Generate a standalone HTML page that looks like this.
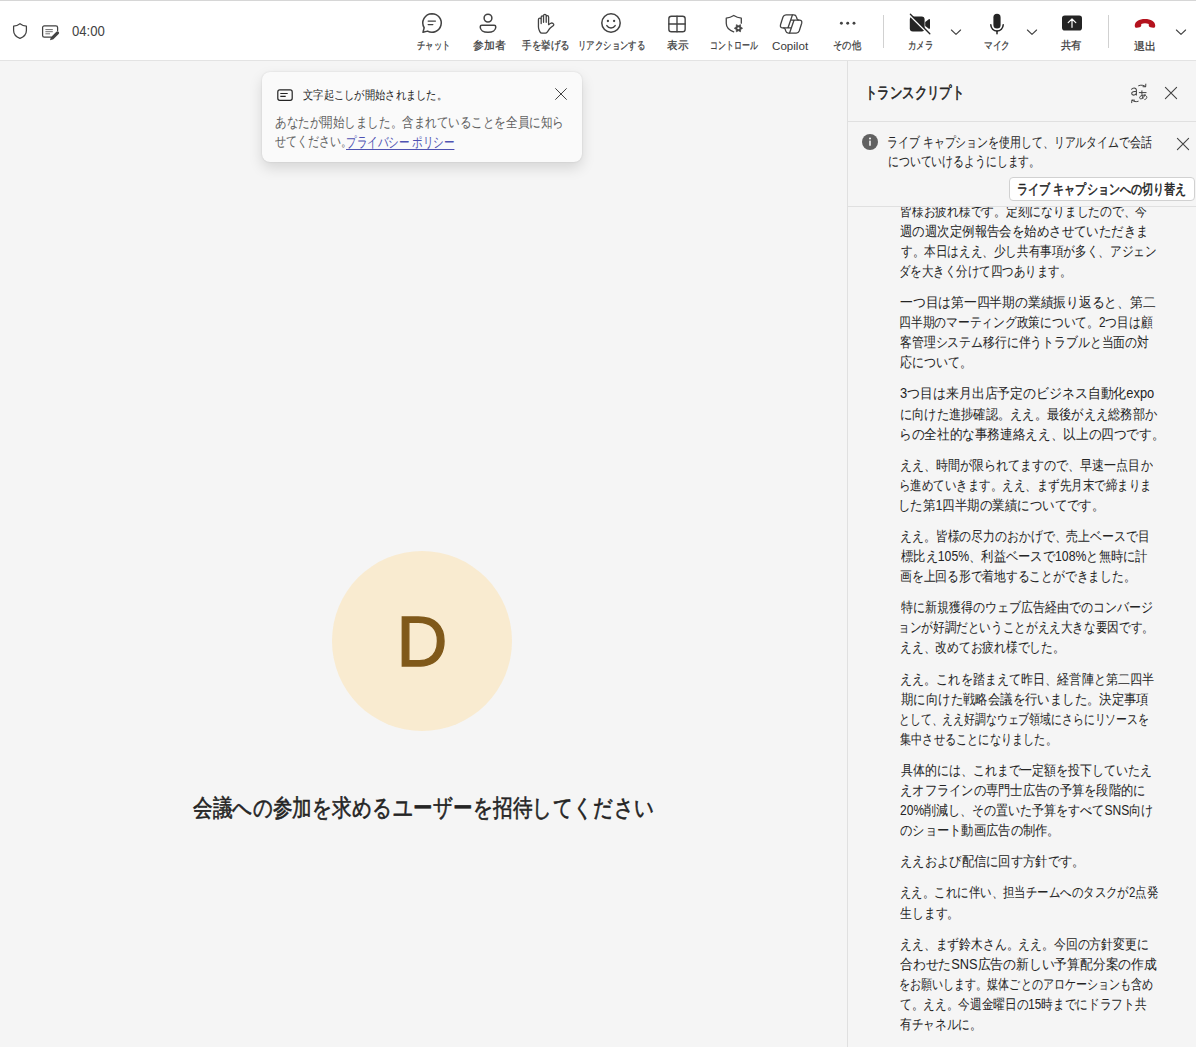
<!DOCTYPE html>
<html lang="ja">
<head>
<meta charset="utf-8">
<title>Teams</title>
<style>
*{box-sizing:border-box}
html,body{margin:0;padding:0}
body{width:1196px;height:1047px;overflow:hidden;position:relative;background:#f5f5f5;font-family:"Liberation Sans",sans-serif;color:#242424}
.bar{position:absolute;left:0;top:0;width:1196px;height:61px;background:#fff;border-top:1px solid #d6d6d6;border-bottom:1px solid #e3e3e3}
.ic{position:absolute;display:block;overflow:visible}
.sep{position:absolute;top:15px;width:1px;height:33px;background:#d1d1d1}
.t{position:absolute;white-space:nowrap;line-height:20px;height:20px;transform-origin:0 50%;text-align-last:justify;margin:0;padding:0}
.stage{position:absolute;left:0;top:61px;width:847px;height:986px;background:#f5f5f5}
.toast{position:absolute;left:262px;top:72px;width:320px;height:90px;border-radius:8px;background:#fafafa;box-shadow:0 0 2px rgba(0,0,0,.12),0 6px 14px rgba(0,0,0,.13)}
.avatar{position:absolute;left:332px;top:551px;width:180px;height:180px;border-radius:50%;background:#f9ebd0}
.avatar span{position:absolute;left:0;top:.6px;width:180px;height:180px;line-height:180px;text-align:center;font-size:70.500px;color:#80591a;-webkit-text-stroke:1.300px #80591a;letter-spacing:0}
.panel{position:absolute;left:847px;top:61px;width:349px;height:986px;background:#f5f5f5;border-left:1px solid #e0e0e0}
.hr{position:absolute;left:848px;width:348px;height:1px;background:#e0e0e0}
.btn{position:absolute;left:1008.5px;top:177px;width:186px;height:23.5px;border:1px solid #d1d1d1;border-radius:4px;background:#fff}
.scroll{position:absolute;left:848px;top:207px;width:348px;height:840px;overflow:hidden}
a.t{color:#4f52b2;text-decoration:underline;text-underline-offset:2px;text-decoration-thickness:1px}
</style>
</head>
<body>
<div class="stage"></div>
<div class="panel"></div>
<div class="bar"></div>
<!-- toolbar icons -->
<svg class="ic" style="left:10px;top:21px" width="20" height="20" viewBox="0 0 20 20"><path d="M10 2.7c2 1.5 4.1 2.3 6.4 2.5v4.4c0 3.5-2.3 6.3-6.4 7.8-4.1-1.5-6.4-4.3-6.4-7.8V5.2c2.3-.2 4.4-1 6.4-2.5z" fill="none" stroke="#424242" stroke-width="1.25" stroke-linecap="round" stroke-linejoin="round" /></svg>
<svg class="ic" style="left:40px;top:22px" width="22" height="20" viewBox="0 0 22 20"><path d="M11.2 15.1H4.3a1.7 1.7 0 0 1-1.7-1.7V5.6a1.7 1.7 0 0 1 1.7-1.7h11.6a1.7 1.7 0 0 1 1.7 1.7v3" fill="none" stroke="#424242" stroke-width="1.25" stroke-linecap="round" stroke-linejoin="round" /><path d="M5.4 7.6h7.4M5.4 9.7h7.4M5.4 11.8h4.6" stroke="#707070" stroke-width="1" fill="none"/><path d="M16.35 9.75a1.62 1.62 0 0 1 2.3 2.3l-5.3 5.1a1.8 1.8 0 0 1-.8.45l-2.55.65.7-2.5a1.8 1.8 0 0 1 .45-.8z" fill="#424242"/></svg>
<svg class="ic" style="left:420px;top:11.2px" width="24" height="24" viewBox="0 0 24 24"><path d="M12 2.75a9.25 9.25 0 1 1-4.45 17.36L3 21.25l1.15-4.5A9.25 9.25 0 0 1 12 2.75z" fill="none" stroke="#424242" stroke-width="1.5" stroke-linecap="round" stroke-linejoin="round" /><path d="M8.2 10.1h7.2M8.2 13.6h4.6" fill="none" stroke="#424242" stroke-width="1.4" stroke-linecap="round" stroke-linejoin="round" /></svg>
<svg class="ic" style="left:476.1px;top:11px" width="24" height="24" viewBox="0 0 24 24"><circle cx="12" cy="7.1" r="3.9" fill="none" stroke="#424242" stroke-width="1.5"/><path d="M5.9 14.3h12.2a1.7 1.7 0 0 1 1.7 1.7c0 3.1-3.1 5.3-7.8 5.3s-7.8-2.2-7.8-5.3a1.7 1.7 0 0 1 1.7-1.7z" fill="none" stroke="#424242" stroke-width="1.5" stroke-linecap="round" stroke-linejoin="round" /></svg>
<svg class="ic" style="left:534px;top:12px" width="24" height="24" viewBox="0 0 24 24"><path d="M4.45 14.9V7.4a1.36 1.36 0 0 1 2.72 0V11.5M7.2 7.6V5.0a1.17 1.17 0 0 1 2.34 0V10.35M9.54 5.0V3.8a1.33 1.33 0 0 1 2.66 0V10.35M12.2 4.9a1.2 1.2 0 0 1 2.4 0V12.7C15.4 12.0 16.3 11.4 17.2 11.1C17.9 10.9 18.5 11.1 19.1 11.6C19.9 12.2 20.0 12.9 19.4 13.5C18.2 14.5 17.0 15.3 16.0 16.3C14.9 17.5 14.1 18.9 13.2 20.1C12.7 20.8 12.3 21.2 11.4 21.2H8.0C6.9 21.2 6.3 20.6 5.8 19.6C5.2 18.4 4.45 16.5 4.45 14.9" fill="none" stroke="#424242" stroke-width="1.3" stroke-linecap="round" stroke-linejoin="round" /></svg>
<svg class="ic" style="left:598.9px;top:11.1px" width="24" height="24" viewBox="0 0 24 24"><circle cx="12" cy="12" r="9.2" fill="none" stroke="#424242" stroke-width="1.5"/><circle cx="8.9" cy="10" r="1.15" fill="#424242"/><circle cx="15.1" cy="10" r="1.15" fill="#424242"/><path d="M7.8 14.6c1 1.6 2.5 2.4 4.2 2.4s3.2-.8 4.2-2.4" fill="none" stroke="#424242" stroke-width="1.4" stroke-linecap="round" stroke-linejoin="round" /></svg>
<svg class="ic" style="left:665.2px;top:11.6px" width="24" height="24" viewBox="0 0 24 24"><rect x="3.85" y="4.2" width="16.3" height="15.6" rx="2.6" fill="none" stroke="#424242" stroke-width="1.4"/><path d="M12 4.2v15.6M3.85 12h16.3" fill="none" stroke="#424242" stroke-width="1.35" stroke-linecap="round" stroke-linejoin="round" /></svg>
<svg class="ic" style="left:722.3px;top:12.05px" width="24" height="24" viewBox="0 0 24 24"><path d="M19.3 11.2V6.2C16.5 5.9 14.0 5.0 11.75 3.5C9.5 5.0 7.0 5.9 4.25 6.2V11.3C4.25 15.2 7.4 18.3 11.7 19.8" fill="none" stroke="#424242" stroke-width="1.3" stroke-linecap="round" stroke-linejoin="round" /><path d="M20.58 16.23 L18.64 17.50 L18.50 19.82 L16.43 18.78 L14.36 19.82 L14.22 17.50 L12.28 16.23 L14.22 14.96 L14.35 12.64 L16.43 13.68 L18.50 12.64 L18.64 14.96 z" fill="#424242" stroke="#424242" stroke-width=".7" stroke-linejoin="round"/><circle cx="16.43" cy="16.23" r="1.1" fill="#fff"/></svg>
<svg class="ic" style="left:778.8px;top:11.8px" width="24" height="24" viewBox="0 0 24 24"><path d="M7.0 2.9H14.9C16.3 2.9 17.0 3.6 17.4 4.9L18.0 6.7C18.3 7.6 18.9 8.1 19.8 8.1H20.4C22.3 8.1 23.2 9.4 22.7 11.2L20.2 19.0C19.7 20.4 18.7 21.05 17.2 21.05H9.3C7.9 21.05 7.2 20.4 6.8 19.1L6.2 17.3C5.9 16.4 5.3 15.9 4.4 15.9H3.8C1.9 15.9 1.0 14.6 1.5 12.8L4.0 5.0C4.5 3.6 5.5 2.9 7.0 2.9Z" fill="none" stroke="#424242" stroke-width="1.3" stroke-linecap="round" stroke-linejoin="round" /><path d="M13.4 3.0L9.3 15.0C9.1 15.6 8.7 15.9 8.1 15.9H4.4M4.4 15.95H11.9M10.6 21.0L14.7 9.0C14.9 8.4 15.3 8.1 15.9 8.1H19.8M12.1 8.05H19.8" fill="none" stroke="#424242" stroke-width="1.3" stroke-linecap="round" stroke-linejoin="round" /></svg>
<svg class="ic" style="left:835px;top:18px" width="24" height="10" viewBox="0 0 24 10"><circle cx="6.4" cy="5.3" r="1.45" fill="#424242"/><circle cx="12.7" cy="5.3" r="1.45" fill="#424242"/><circle cx="19" cy="5.3" r="1.45" fill="#424242"/></svg>
<svg class="ic" style="left:908.4px;top:11.5px" width="24" height="24" viewBox="0 0 24 24"><rect x="1.8" y="4.500" width="14.800" height="15" rx="3" fill="#242424"/><path d="M17.200 10.000l3.600-2.800c.6-.4 1.200 0 1.200.7v8.200c0 .7-.6 1.100-1.200.7l-3.600-2.800z" fill="#242424"/><path d="M1.500 3.300L21.100 22.600" stroke="#fff" stroke-width="1.600" stroke-linecap="round" fill="none"/><path d="M2.400 2.300L21.800 21.700" stroke="#242424" stroke-width="1.350" stroke-linecap="round" fill="none"/></svg>
<svg class="ic" style="left:984.7px;top:11.9px" width="24" height="24" viewBox="0 0 24 24"><rect x="8.400" y="1.800" width="7.200" height="14.800" rx="3.600" fill="#242424"/><path d="M5.800 12.800a6.200 6.200 0 0 0 12.400 0" fill="none" stroke="#242424" stroke-width="1.5" stroke-linecap="round" stroke-linejoin="round" /><path d="M12 19.200V21.700" fill="none" stroke="#242424" stroke-width="1.5" stroke-linecap="round" stroke-linejoin="round" /></svg>
<svg class="ic" style="left:1060.1px;top:11.1px" width="24" height="24" viewBox="0 0 24 24"><rect x="2" y="4.500" width="20" height="15" rx="2.800" fill="#242424"/><path d="M12 16.300V8.300M8.200 11.600L12 8.000l3.800 3.600" fill="none" stroke="#fff" stroke-width="1.2" stroke-linecap="round" stroke-linejoin="round" /></svg>
<svg class="ic" style="left:1133px;top:14px" width="24" height="24" viewBox="0 0 24 24"><path d="M1.750 11.800c0-4.300 4.500-6.700 10.250-6.700s10.250 2.400 10.250 6.700c0 1.400-.8 2.200-2.100 2.000l-2.700-.5c-1.100-.2-1.700-.9-1.700-2.000V9.900c-1.200-.5-2.400-.7-3.750-.7s-2.550.2-3.750.7v1.400c0 1.100-.6 1.800-1.700 2.000l-2.700.5c-1.300.2-2.100-.6-2.100-2.000z" fill="#b4121d"/></svg>
<svg class="ic" style="left:949px;top:26.5px" width="14" height="10" viewBox="0 0 14 10"><path d="M2.400 3.000l4.600 4.300 4.600-4.300" fill="none" stroke="#424242" stroke-width="1.1" stroke-linecap="round" stroke-linejoin="round" /></svg>
<svg class="ic" style="left:1025px;top:26.5px" width="14" height="10" viewBox="0 0 14 10"><path d="M2.400 3.000l4.600 4.300 4.600-4.300" fill="none" stroke="#424242" stroke-width="1.1" stroke-linecap="round" stroke-linejoin="round" /></svg>
<svg class="ic" style="left:1174px;top:26.5px" width="14" height="10" viewBox="0 0 14 10"><path d="M2.400 3.000l4.600 4.300 4.600-4.300" fill="none" stroke="#424242" stroke-width="1.1" stroke-linecap="round" stroke-linejoin="round" /></svg>
<div class="sep" style="left:883px"></div><div class="sep" style="left:1107.5px"></div>
<!-- toolbar text -->
<div class="t" id="time" style="left:72.30px;top:21.00px;font-size:14px;color:#424242;transform:scaleX(0.9371);width:35.05px">04:00</div>
<div class="t" id="lb0" style="left:416.75px;top:34.60px;font-size:11px;color:#3a3a3a;transform:scaleX(0.7525);width:44.00px;-webkit-text-stroke:0.25px #3a3a3a">チャット</div>
<div class="t" id="lb1" style="left:472.70px;top:35.10px;font-size:11px;color:#3a3a3a;transform:scaleX(0.9813);width:33.00px;-webkit-text-stroke:0.25px #3a3a3a">参加者</div>
<div class="t" id="lb2" style="left:521.90px;top:35.10px;font-size:11px;color:#3a3a3a;transform:scaleX(0.8667);width:55.00px;-webkit-text-stroke:0.25px #3a3a3a">手を挙げる</div>
<div class="t" id="lb3" style="left:577.67px;top:34.60px;font-size:11px;color:#3a3a3a;transform:scaleX(0.7647);width:88.00px;-webkit-text-stroke:0.25px #3a3a3a">リアクションする</div>
<div class="t" id="lb4" style="left:667.00px;top:35.10px;font-size:11px;color:#3a3a3a;transform:scaleX(0.9682);width:22.00px;-webkit-text-stroke:0.25px #3a3a3a">表示</div>
<div class="t" id="lb5" style="left:710.18px;top:34.60px;font-size:11px;color:#3a3a3a;transform:scaleX(0.7231);width:66.00px;-webkit-text-stroke:0.25px #3a3a3a">コントロール</div>
<div class="t" id="lb6" style="left:772.45px;top:35.60px;font-size:11px;color:#3a3a3a;transform:scaleX(1.0545);width:34.25px">Copilot</div>
<div class="t" id="lb7" style="left:832.56px;top:35.10px;font-size:11px;color:#3a3a3a;transform:scaleX(0.8438);width:33.00px;-webkit-text-stroke:0.25px #3a3a3a">その他</div>
<div class="t" id="lb8" style="left:907.73px;top:35.10px;font-size:11px;color:#3a3a3a;transform:scaleX(0.7700);width:33.00px;-webkit-text-stroke:0.25px #3a3a3a">カメラ</div>
<div class="t" id="lb9" style="left:983.51px;top:34.60px;font-size:11px;color:#3a3a3a;transform:scaleX(0.7867);width:33.00px;-webkit-text-stroke:0.25px #3a3a3a">マイク</div>
<div class="t" id="lb10" style="left:1061.30px;top:35.10px;font-size:11px;color:#3a3a3a;transform:scaleX(0.9455);width:22.00px;-webkit-text-stroke:0.25px #3a3a3a">共有</div>
<div class="t" id="lb11" style="left:1134.20px;top:35.60px;font-size:11px;color:#3a3a3a;transform:scaleX(1.0000);width:22.00px;-webkit-text-stroke:0.25px #3a3a3a">退出</div>
<!-- toast -->
<div class="toast"></div>
<svg class="ic" style="left:275px;top:85px" width="20" height="20" viewBox="0 0 20 20"><rect x="2.800" y="4.900" width="14.400" height="10.400" rx="2" fill="none" stroke="#242424" stroke-width="1.200"/><path d="M5.300 8.500h7.400M5.300 11.400h5.400" stroke="#242424" stroke-width="1.100" fill="none"/></svg><svg class="ic" style="left:553px;top:86.4px" width="16" height="16" viewBox="0 0 16 16"><path d="M2.600 2.600l10.800 10.800M13.400 2.600L2.600 13.400" fill="none" stroke="#424242" stroke-width="1" stroke-linecap="round" stroke-linejoin="round" /></svg>
<div class="t" id="toastT" style="left:302.64px;top:85.40px;font-size:12px;color:#242424;transform:scaleX(0.8572);width:168.00px">文字起こしが開始されました。</div>
<div class="t" id="toastB1" style="left:274.57px;top:111.60px;font-size:14px;color:#616161;transform:scaleX(0.8251);width:350.00px">あなたが開始しました。含まれていることを全員に知ら</div>
<div class="t" id="toastB2" style="left:274.62px;top:131.30px;font-size:14px;color:#616161;transform:scaleX(0.7828);width:98.00px">せてください。</div>
<a class="t" id="toastL" style="left:346.25px;top:132.30px;font-size:14px;color:#4f52b2;transform:scaleX(0.7535);width:143.89px">プライバシー ポリシー</a>
<!-- stage -->
<div class="avatar"><span>D</span></div>
<div class="t" id="head" style="left:192.60px;top:797.80px;font-size:24px;color:#242424;transform:scaleX(0.8152);width:566.00px;-webkit-text-stroke:0.6px #242424">会議への参加を求めるユーザーを招待してください</div>
<!-- transcript panel -->
<div class="hr" style="top:121px"></div>
<div class="hr" style="top:206px"></div>
<div class="btn"></div>
<svg class="ic" style="left:1129px;top:83px" width="20" height="20" viewBox="0 0 20 20"><path d="M2.600 6.300c.6-.9 1.500-1.300 2.500-1.300 1.500 0 2.300.8 2.300 2.300v4.600M7.400 8.300c-2.900 0-4.700.6-4.700 2.200 0 1.000.8 1.600 1.900 1.600 1.300 0 2.400-.8 2.800-2.000" fill="none" stroke="#424242" stroke-width="1.05" stroke-linecap="round" stroke-linejoin="round" /><path d="M10.300 9.600h6.800M12.900 7.800c-.2 2.800.1 5.400 1.000 7.700M16.100 11.400c-.7 2.300-2.200 4.000-3.900 4.400-1.000.2-1.700-.4-1.600-1.300.2-1.500 2.400-2.600 4.700-2.300 1.600.2 2.600 1.100 2.500 2.300-.1 1.000-.8 1.700-2.000 2.000" fill="none" stroke="#424242" stroke-width="1" stroke-linecap="round" stroke-linejoin="round" /><path d="M9.600 2.700c2.300-1.000 4.900-.7 6.900.8M16.800 1.100l-.1 2.700-2.700-.1" fill="none" stroke="#424242" stroke-width="1" stroke-linecap="round" stroke-linejoin="round" /><path d="M9.200 18.300c-2.100.8-4.400.4-6.100-1.100M2.700 19.700l.2-2.700 2.700.2" fill="none" stroke="#424242" stroke-width="1" stroke-linecap="round" stroke-linejoin="round" /></svg><svg class="ic" style="left:1163.2px;top:85.2px" width="16" height="16" viewBox="0 0 16 16"><path d="M2.4 2.4l11.2 11.2M13.6 2.4l-11.2 11.2" fill="none" stroke="#424242" stroke-width="1.1" stroke-linecap="round" stroke-linejoin="round" /></svg><svg class="ic" style="left:1175px;top:136.2px" width="16" height="16" viewBox="0 0 16 16"><path d="M2.4 2.4l11.2 11.2M13.6 2.4l-11.2 11.2" fill="none" stroke="#424242" stroke-width="1.1" stroke-linecap="round" stroke-linejoin="round" /></svg><svg class="ic" style="left:862px;top:134px" width="16" height="16" viewBox="0 0 16 16"><circle cx="8" cy="8" r="8" fill="#616161"/><circle cx="8" cy="4.500" r=".95" fill="#fff"/><rect x="7.250" y="6.600" width="1.500" height="5.200" rx=".4" fill="#fff"/></svg>
<div class="t" id="ptitle" style="left:864.83px;top:83.00px;font-size:16px;color:#242424;transform:scaleX(0.7742);width:128.00px;-webkit-text-stroke:0.6px #242424">トランスクリプト</div>
<div class="t" id="ban1" style="left:886.84px;top:131.50px;font-size:14px;color:#242424;transform:scaleX(0.7790);width:339.89px">ライブ キャプションを使用して、リアルタイムで会話</div>
<div class="t" id="ban2" style="left:887.62px;top:151.20px;font-size:14px;color:#242424;transform:scaleX(0.7762);width:196.00px">についていけるようにします。</div>
<div class="t" id="btn" style="left:1016.91px;top:178.50px;font-size:14px;color:#242424;transform:scaleX(0.7910);width:213.89px;-webkit-text-stroke:0.5px #242424">ライブ キャプションへの切り替え</div>
<div class="scroll">
<div class="t" id="tr0" style="left:51.96px;top:-6.25px;font-size:14px;color:#242424;transform:scaleX(0.8408);width:294.00px">皆様お疲れ様です。定刻になりましたので、今</div>
<div class="t" id="tr1" style="left:51.91px;top:13.83px;font-size:14px;color:#242424;transform:scaleX(0.8877);width:280.00px">週の週次定例報告会を始めさせていただきま</div>
<div class="t" id="tr2" style="left:52.80px;top:33.91px;font-size:14px;color:#242424;transform:scaleX(0.8290);width:308.00px">す。本日はええ、少し共有事項が多く、アジェン</div>
<div class="t" id="tr3" style="left:51.16px;top:53.99px;font-size:14px;color:#242424;transform:scaleX(0.8207);width:210.00px">ダを大きく分けて四つあります。</div>
<div class="t" id="tr4" style="left:51.89px;top:85.11px;font-size:14px;color:#242424;transform:scaleX(0.9126);width:280.00px">一つ目は第一四半期の業績振り返ると、第二</div>
<div class="t" id="tr5" style="left:51.12px;top:105.19px;font-size:14px;color:#242424;transform:scaleX(0.8401);width:301.80px">四半期のマーティング政策について。2つ目は顧</div>
<div class="t" id="tr6" style="left:51.95px;top:125.27px;font-size:14px;color:#242424;transform:scaleX(0.8471);width:294.00px">客管理システム移行に伴うトラブルと当面の対</div>
<div class="t" id="tr7" style="left:51.94px;top:145.35px;font-size:14px;color:#242424;transform:scaleX(0.8562);width:84.00px">応について。</div>
<div class="t" id="tr8" style="left:51.88px;top:176.47px;font-size:14px;color:#242424;transform:scaleX(0.9207);width:276.16px">3つ目は来月出店予定のビジネス自動化expo</div>
<div class="t" id="tr9" style="left:51.93px;top:196.55px;font-size:14px;color:#242424;transform:scaleX(0.8744);width:294.00px">に向けた進捗確認。ええ。最後がええ総務部か</div>
<div class="t" id="tr10" style="left:51.00px;top:216.63px;font-size:14px;color:#242424;transform:scaleX(0.9025);width:294.00px">らの全社的な事務連絡ええ、以上の四つです。</div>
<div class="t" id="tr11" style="left:51.94px;top:247.75px;font-size:14px;color:#242424;transform:scaleX(0.8590);width:294.00px">ええ、時間が限られてますので、早速一点目か</div>
<div class="t" id="tr12" style="left:51.16px;top:267.83px;font-size:14px;color:#242424;transform:scaleX(0.8208);width:308.00px">ら進めていきます。ええ、まず先月末で締まりま</div>
<div class="t" id="tr13" style="left:50.13px;top:287.91px;font-size:14px;color:#242424;transform:scaleX(0.8904);width:231.80px">した第1四半期の業績についてです。</div>
<div class="t" id="tr14" style="left:51.95px;top:319.03px;font-size:14px;color:#242424;transform:scaleX(0.8490);width:294.00px">ええ。皆様の尽力のおかげで、売上ベースで目</div>
<div class="t" id="tr15" style="left:52.80px;top:339.11px;font-size:14px;color:#242424;transform:scaleX(0.8759);width:281.62px">標比え105%、利益ベースで108%と無時に計</div>
<div class="t" id="tr16" style="left:51.96px;top:359.19px;font-size:14px;color:#242424;transform:scaleX(0.8409);width:280.00px">画を上回る形で着地することができました。</div>
<div class="t" id="tr17" style="left:52.80px;top:390.31px;font-size:14px;color:#242424;transform:scaleX(0.8556);width:294.00px">特に新規獲得のウェブ広告経由でのコンバージ</div>
<div class="t" id="tr18" style="left:50.31px;top:410.39px;font-size:14px;color:#242424;transform:scaleX(0.8305);width:308.00px">ョンが好調だということがええ大きな要因です。</div>
<div class="t" id="tr19" style="left:51.96px;top:430.47px;font-size:14px;color:#242424;transform:scaleX(0.8405);width:196.00px">ええ、改めてお疲れ様でした。</div>
<div class="t" id="tr20" style="left:51.94px;top:461.59px;font-size:14px;color:#242424;transform:scaleX(0.8647);width:294.00px">ええ。これを踏まえて昨日、経営陣と第二四半</div>
<div class="t" id="tr21" style="left:52.80px;top:481.67px;font-size:14px;color:#242424;transform:scaleX(0.8853);width:280.00px">期に向けた戦略会議を行いました。決定事項</div>
<div class="t" id="tr22" style="left:51.25px;top:501.75px;font-size:14px;color:#242424;transform:scaleX(0.7759);width:322.00px">として、ええ好調なウェブ領域にさらにリソースを</div>
<div class="t" id="tr23" style="left:52.00px;top:521.83px;font-size:14px;color:#242424;transform:scaleX(0.8000);width:196.00px">集中させることになりました。</div>
<div class="t" id="tr24" style="left:52.80px;top:552.95px;font-size:14px;color:#242424;transform:scaleX(0.8532);width:294.00px">具体的には、これまで一定額を投下していたえ</div>
<div class="t" id="tr25" style="left:51.92px;top:573.03px;font-size:14px;color:#242424;transform:scaleX(0.8766);width:280.00px">えオフラインの専門士広告の予算を段階的に</div>
<div class="t" id="tr26" style="left:51.94px;top:593.11px;font-size:14px;color:#242424;transform:scaleX(0.8590);width:294.81px">20%削減し、その置いた予算をすべてSNS向け</div>
<div class="t" id="tr27" style="left:51.92px;top:613.19px;font-size:14px;color:#242424;transform:scaleX(0.8772);width:182.00px">のショート動画広告の制作。</div>
<div class="t" id="tr28" style="left:51.92px;top:644.31px;font-size:14px;color:#242424;transform:scaleX(0.8794);width:210.00px">ええおよび配信に回す方針です。</div>
<div class="t" id="tr29" style="left:51.98px;top:675.43px;font-size:14px;color:#242424;transform:scaleX(0.8175);width:315.80px">ええ。これに伴い、担当チームへのタスクが2点発</div>
<div class="t" id="tr30" style="left:51.95px;top:695.51px;font-size:14px;color:#242424;transform:scaleX(0.8475);width:70.00px">生します。</div>
<div class="t" id="tr31" style="left:51.95px;top:726.63px;font-size:14px;color:#242424;transform:scaleX(0.8459);width:294.00px">ええ、まず鈴木さん。ええ。今回の方針変更に</div>
<div class="t" id="tr32" style="left:51.88px;top:746.71px;font-size:14px;color:#242424;transform:scaleX(0.9150);width:280.80px">合わせたSNS広告の新しい予算配分案の作成</div>
<div class="t" id="tr33" style="left:51.22px;top:766.79px;font-size:14px;color:#242424;transform:scaleX(0.7890);width:322.00px">をお願いします。媒体ごとのアロケーションも含め</div>
<div class="t" id="tr34" style="left:51.97px;top:786.87px;font-size:14px;color:#242424;transform:scaleX(0.8333);width:295.58px">て。ええ。今週金曜日の15時までにドラフト共</div>
<div class="t" id="tr35" style="left:51.97px;top:806.95px;font-size:14px;color:#242424;transform:scaleX(0.8333);width:98.00px">有チャネルに。</div>
</div>
</body>
</html>
